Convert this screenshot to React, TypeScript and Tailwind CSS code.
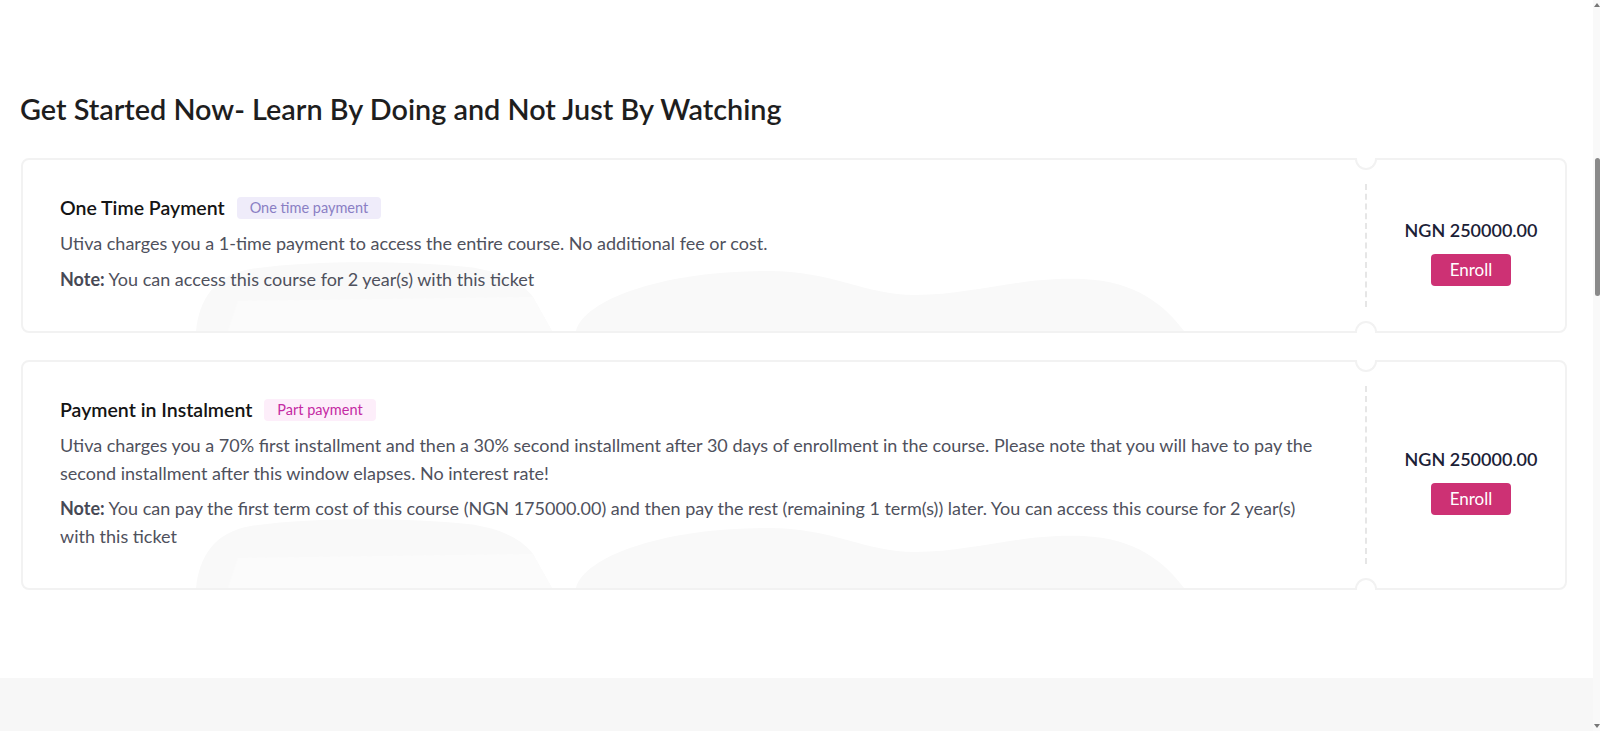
import React from 'react'

interface Plan {
  title: string
  badge: string
  badgeClass: string
  description: string
  note: string
  price: string
}

const PLANS: Plan[] = [
  {
    title: 'One Time Payment',
    badge: 'One time payment',
    badgeClass: 'bg-[#efecfa] text-[#8a7fc4]',
    description:
      'Utiva charges you a 1-time payment to access the entire course. No additional fee or cost.',
    note: 'You can access this course for 2 year(s) with this ticket',
    price: 'NGN 250000.00',
  },
  {
    title: 'Payment in Instalment',
    badge: 'Part payment',
    badgeClass: 'bg-[#fdeefa] text-[#c42aa3]',
    description:
      'Utiva charges you a 70% first installment and then a 30% second installment after 30 days of enrollment in the course. Please note that you will have to pay the second installment after this window elapses. No interest rate!',
    note: 'You can pay the first term cost of this course (NGN 175000.00) and then pay the rest (remaining 1 term(s)) later. You can access this course for 2 year(s) with this ticket',
    price: 'NGN 250000.00',
  },
]

function Blobs() {
  return (
    <svg
      className="absolute left-0 bottom-0 pointer-events-none"
      width="1200"
      height="70"
      viewBox="0 0 1200 70"
      fill="none"
    >
      <path
        d="M173 70 C176 38 192 14 228 8 C300 -2 390 1 445 6 C478 10 500 22 510 36 L529 70 Z"
        fill="#f9f9f9"
      />
      <path d="M215 40 L510 36 L529 70 L205 70 Z" fill="#fbfbfb" />
      <path
        d="M553 70 C562 38 640 10 745 10 C810 10 842 34 892 34 C952 34 992 16 1060 18 C1112 20 1142 44 1161 70 Z"
        fill="#f9f9f9"
      />
    </svg>
  )
}

function PlanCard({ plan }: { plan: Plan }) {
  return (
    <div className="relative flex rounded-lg border-2 border-[#f2f2f2] bg-white">
      <Blobs />

      {/* Details */}
      <div className="relative flex-1 pl-[37px] pr-10 pt-9 pb-[38px]">
        <div className="max-w-[1256px]">
          <div className="flex items-center gap-3">
            <h3 className="text-[19.5px] leading-6 font-semibold text-[#141414]">{plan.title}</h3>
            <span className={`h-[22px] rounded px-[13px] text-[14.5px] leading-[22px] ${plan.badgeClass}`}>
              {plan.badge}
            </span>
          </div>
          <p className="mt-[10px] text-[18px] leading-[27.5px] text-[#4f515d]">{plan.description}</p>
          <p className="mt-2 text-[18px] leading-[27.5px] text-[#4f515d]">
            <strong className="font-bold text-[#474955]">Note:</strong> {plan.note}
          </p>
        </div>
      </div>

      {/* Price column */}
      <div className="relative flex w-[200px]">
        <span className="absolute -top-[2px] -left-[10px] w-[22px] h-[12px] rounded-b-full border-2 border-t-0 border-[#f2f2f2] bg-white" />
        <span className="absolute -bottom-[2px] -left-[10px] w-[22px] h-[12px] rounded-t-full border-2 border-b-0 border-[#f2f2f2] bg-white" />
        <div className="my-6 border-l-2 border-dashed border-[#e6e6e6]" />
        <div className="flex flex-1 flex-col items-center justify-center pl-[10px] pt-3">
          <div className="text-[18px] leading-6 font-semibold text-[#1b2136]">{plan.price}</div>
          <button className="mt-3 h-[32px] w-[80px] rounded bg-[#cd3174] text-[17px] text-white">
            Enroll
          </button>
        </div>
      </div>
    </div>
  )
}

export default function App() {
  return (
    <div className="flex h-[731px] overflow-hidden bg-white font-['Lato','Noto_Sans',sans-serif]">
      <div className="flex flex-1 flex-col">
        <div className="flex-1 pt-[91px]">
          <h2 className="px-5 text-[28.8px] leading-9 font-semibold text-[#1e1e1e]">
            Get Started Now- Learn By Doing and Not Just By Watching
          </h2>
          <div className="mt-[31px] flex flex-col gap-[27px] pl-[21px] pr-[26px]">
            {PLANS.map(p => (
              <PlanCard key={p.title} plan={p} />
            ))}
          </div>
        </div>
        <div className="h-[53px] bg-[#f7f7f7]" />
      </div>

      {/* Scrollbar */}
      <div className="flex w-[7px] flex-col items-end bg-[#f9f9f9]">
        <div className="mt-[3px] h-0 w-0 border-x-[3px] border-b-[4px] border-x-transparent border-b-[#777]" />
        <div className="h-[151px]" />
        <div className="h-[138px] w-[5px] rounded-sm bg-[#8a8a8a]" />
        <div className="flex-1" />
        <div className="mb-[3px] h-0 w-0 border-x-[3px] border-t-[4px] border-x-transparent border-t-[#777]" />
      </div>
    </div>
  )
}
